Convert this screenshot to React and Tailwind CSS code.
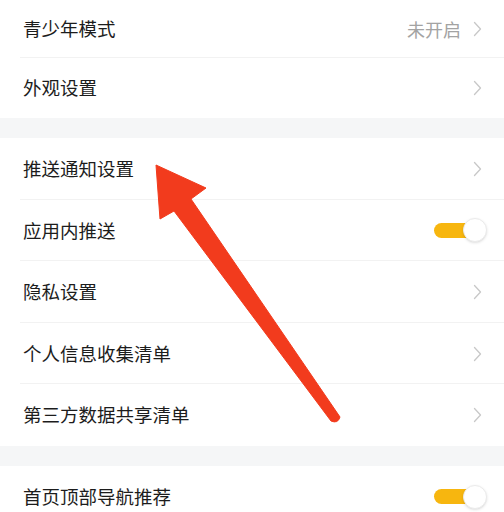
const sections = [
  [
    { label: "青少年模式", value: "未开启", type: "link", h: "h-[58px]" },
    { label: "外观设置", type: "link", h: "h-[60px]" },
  ],
  [
    { label: "推送通知设置", type: "link" },
    { label: "应用内推送", type: "toggle" },
    { label: "隐私设置", type: "link" },
    { label: "个人信息收集清单", type: "link" },
    { label: "第三方数据共享清单", type: "link" },
  ],
  [{ label: "首页顶部导航推荐", type: "toggle" }],
];

function Chevron() {
  return (
    <svg width="9" height="16" viewBox="0 0 9 16" fill="none" className="ml-1">
      <path d="M1.5 1.5 L7.5 8 L1.5 14.5" stroke="#c8c8c8" strokeWidth="1.3" strokeLinecap="round" strokeLinejoin="round" />
    </svg>
  );
}

function Toggle() {
  return (
    <div className="relative w-[53px] h-[24px] -mr-[5px] flex items-center">
      <div className="w-[42px] h-[15px] rounded-full bg-[#f7b60f]" />
      <div className="absolute right-0 top-0 w-[24px] h-[24px] rounded-full bg-white border border-[#ebebeb] shadow-sm" />
    </div>
  );
}

function Row({ item, last }) {
  return (
    <div className={`${item.h || "h-[61.6px]"} flex items-center pl-[23px] pr-[22px] relative`}>
      <span className="flex-1 text-[18.5px] text-[#1c1c1c]">{item.label}</span>
      {item.value && <span className="text-[18px] text-[#a3a3a3] mr-[8px]">{item.value}</span>}
      {item.type === "link" ? <Chevron /> : <Toggle />}
      {!last && <div className="absolute left-[20px] right-0 bottom-0 h-px bg-[#f2f2f2]" />}
    </div>
  );
}

export default function App() {
  return (
    <div className="relative w-[504px] h-[512px] overflow-hidden bg-white" style={{ fontFamily: '"Noto Sans CJK SC", "Noto Sans", sans-serif' }}>
      {sections.map((sec, i) => (
        <div key={i}>
          {i > 0 && <div className="h-[20px] bg-[#f5f6f7]" />}
          <div className="bg-white">
            {sec.map((item, j) => (
              <Row key={j} item={item} last={j === sec.length - 1} />
            ))}
          </div>
        </div>
      ))}
      <svg className="absolute left-0 top-0 pointer-events-none" width="504" height="512" viewBox="0 0 504 512">
        <path
          d="M156 165 L206 188 L191 199 L340 417 Q338 424 331 421 L174 211 L160 219 Z"
          fill="#f23b1d"
          stroke="#f23b1d"
          strokeWidth="1"
          strokeLinejoin="round"
        />
      </svg>
    </div>
  );
}
